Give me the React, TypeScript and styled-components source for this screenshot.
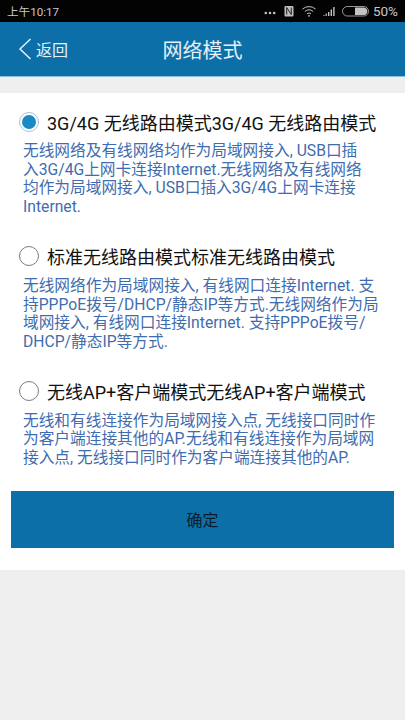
import styled, { createGlobalStyle } from 'styled-components';

const BLUE = '#0d6fa8';

const Global = createGlobalStyle`
    html, body {
        margin: 0;
        padding: 0;
        background: #efeff0;
    }
    body {
        font-family: "Roboto", "Noto Sans CJK SC", sans-serif;
    }
`;

const Page = styled.div`
    width: 405px;
    height: 720px;
    overflow: hidden;
    background: #efeff0;
`;

const StatusBar = styled.div`
    height: 22px;
    background: #030303;
    color: #c8c8c8;
    font-size: 11.6px;
    display: flex;
    align-items: center;
    justify-content: space-between;
    padding: 0 7px 0 7px;
`;

const StatusIcons = styled.div`
    display: flex;
    align-items: center;
    gap: 4px;
    font-size: 13.5px;
`;

const Header = styled.header`
    height: 54px;
    background: ${BLUE};
    border-bottom: 1px solid #8fc0d8;
    display: grid;
    grid-template-columns: 1fr auto 1fr;
    align-items: center;
    color: #e6f1f7;
`;

const Back = styled.div`
    display: flex;
    align-items: center;
    gap: 4px;
    padding-left: 18px;
    font-size: 16px;
`;

const Title = styled.h1`
    margin: 0;
    font-size: 20px;
    font-weight: 400;
`;

const Card = styled.main`
    margin-top: 16px;
    height: 477px;
    box-sizing: border-box;
    background: #fff;
    padding: 15px 11px 0;
`;

const Option = styled.section<{ $gap: number }>`
    margin-bottom: ${(p) => p.$gap}px;
`;

const OptionHead = styled.div`
    display: flex;
    align-items: center;
    gap: 8px;
    padding-left: 8px;
    height: 27px;
`;

const Radio = styled.span<{ $checked?: boolean }>`
    width: 20px;
    height: 20px;
    flex: none;
    box-sizing: border-box;
    border-radius: 50%;
    border: 1px solid ${(p) => (p.$checked ? '#9cc4da' : '#7c7c7c')};
    background: #fff;
    display: flex;
    align-items: center;
    justify-content: center;
    &::after {
        content: '';
        display: ${(p) => (p.$checked ? 'block' : 'none')};
        width: 14px;
        height: 14px;
        border-radius: 50%;
        background: #1b8ac4;
    }
`;

const OptionName = styled.div`
    font-size: 18px;
    color: #111;
    white-space: nowrap;
`;

const OptionText = styled.p`
    margin: 7px 0 0;
    padding-left: 12px;
    font-size: 15.7px;
    line-height: 18.7px;
    color: #3f6cae;
    white-space: nowrap;
`;

const Confirm = styled.button`
    display: block;
    width: 100%;
    height: 57px;
    border: 0;
    padding: 0;
    background: ${BLUE};
    color: #0c1c28;
    font: inherit;
    font-size: 16px;
`;

const options = [
    {
        name: '3G/4G 无线路由模式3G/4G 无线路由模式',
        checked: true,
        gap: 26,
        lines: [
            '无线网络及有线网络均作为局域网接入, USB口插',
            '入3G/4G上网卡连接Internet.无线网络及有线网络',
            '均作为局域网接入, USB口插入3G/4G上网卡连接',
            'Internet.',
        ],
    },
    {
        name: '标准无线路由模式标准无线路由模式',
        gap: 26,
        lines: [
            '无线网络作为局域网接入, 有线网口连接Internet. 支',
            '持PPPoE拨号/DHCP/静态IP等方式.无线网络作为局',
            '域网接入, 有线网口连接Internet. 支持PPPoE拨号/',
            'DHCP/静态IP等方式.',
        ],
    },
    {
        name: '无线AP+客户端模式无线AP+客户端模式',
        gap: 23,
        lines: [
            '无线和有线连接作为局域网接入点, 无线接口同时作',
            '为客户端连接其他的AP.无线和有线连接作为局域网',
            '接入点, 无线接口同时作为客户端连接其他的AP.',
        ],
    },
];

const StatusGlyphs = () => (
    <svg width="105" height="14" viewBox="0 0 105 14" fill="none">
        <circle cx="1.8" cy="9" r="1.3" fill="#c4c4c4" />
        <circle cx="6" cy="9" r="1.3" fill="#c4c4c4" />
        <circle cx="10.2" cy="9" r="1.3" fill="#c4c4c4" />
        <rect x="20.5" y="2" width="9" height="10.5" rx="1" fill="#bdbdbd" />
        <path d="M22.7 10.5v-7l4.6 7v-7" stroke="#222" strokeWidth="1" />
        <path d="M38.5 5a10 10 0 0 1 13 0M40.8 7.5a6.6 6.6 0 0 1 8.4 0M43 9.8a3.2 3.2 0 0 1 4 0" stroke="#c4c4c4" strokeWidth="1" />
        <circle cx="45" cy="11.8" r="0.9" fill="#c4c4c4" />
        <path d="M59.5 11h1v1h-1zM61.6 9.5h1.2V12h-1.2zM64 8h1.4v4H64zM66.6 5.5h1.4V12h-1.4zM69.2 3h1.4v9h-1.4z" fill="#c4c4c4" />
        <rect x="78.5" y="2.5" width="26" height="9.5" rx="4.7" stroke="#a8a8a8" strokeWidth="0.9" />
        <path d="M91 3.4h9a3.9 3.9 0 0 1 0 7.7h-9z" fill="#c4c4c4" />
    </svg>
);

export default function App() {
    return (
        <Page>
            <Global />
            <StatusBar>
                <span>上午10:17</span>
                <StatusIcons>
                    <StatusGlyphs />
                    <span>50%</span>
                </StatusIcons>
            </StatusBar>
            <Header>
                <Back>
                    <svg width="14" height="22" viewBox="0 0 14 22" fill="none">
                        <path d="M12.5 1 2 11l10.5 10" stroke="#e6f1f7" strokeWidth="1.5" />
                    </svg>
                    <span>返回</span>
                </Back>
                <Title>网络模式</Title>
                <div />
            </Header>
            <Card>
                {options.map((o) => (
                    <Option key={o.name} $gap={o.gap}>
                        <OptionHead>
                            <Radio $checked={o.checked} />
                            <OptionName>{o.name}</OptionName>
                        </OptionHead>
                        <OptionText>
                            {o.lines.map((l) => (
                                <span key={l}>
                                    {l}
                                    <br />
                                </span>
                            ))}
                        </OptionText>
                    </Option>
                ))}
                <Confirm>确定</Confirm>
            </Card>
        </Page>
    );
}
